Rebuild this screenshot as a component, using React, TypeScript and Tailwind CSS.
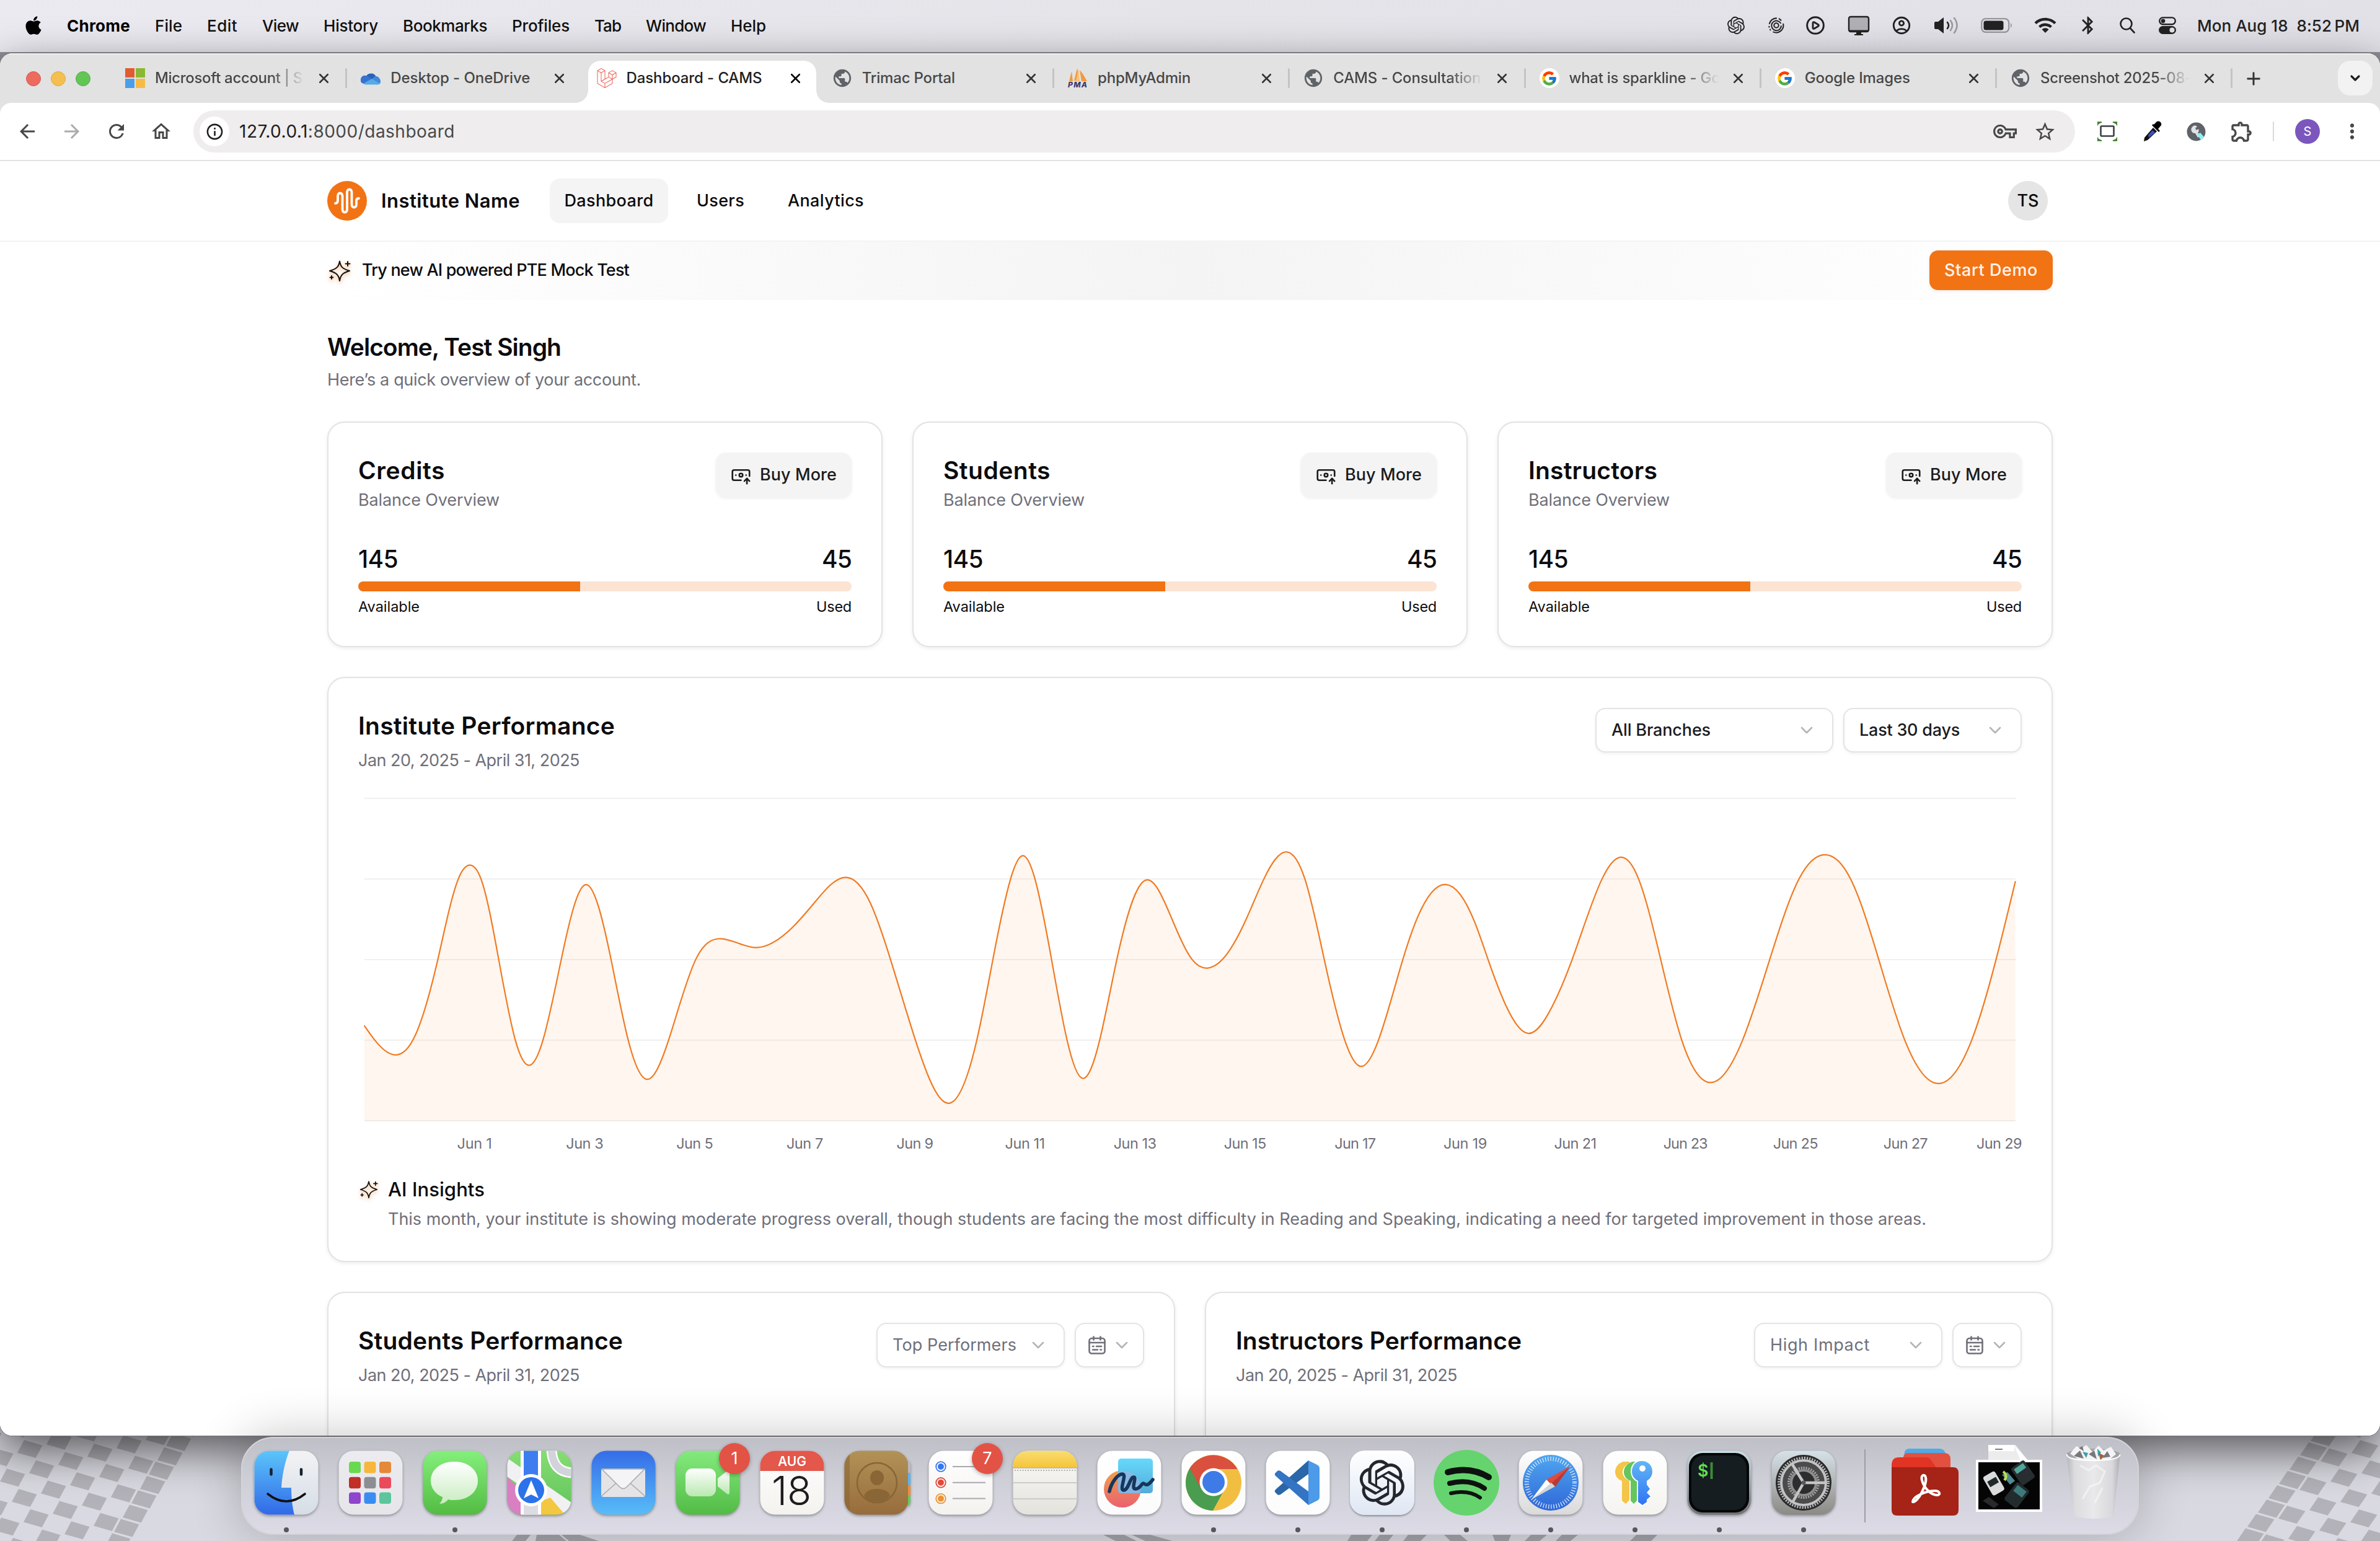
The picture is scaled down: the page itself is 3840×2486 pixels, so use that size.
import { useLayoutEffect, useRef, type ReactNode } from "react";
import { BanknoteArrowUp, ChevronDown, X, Plus, CirclePlay } from "lucide-react";
import { FaApple, FaLaravel } from "react-icons/fa";
import { FcGoogle } from "react-icons/fc";
import { RiOpenaiFill } from "react-icons/ri";
import {
  MdArrowBack,
  MdArrowForward,
  MdBluetooth,
  MdMoreVert,
  MdOutlineAccountCircle,
  MdOutlineExtension,
  MdOutlineHome,
  MdOutlineInfo,
  MdOutlineVpnKey,
  MdPublic,
  MdRefresh,
  MdStarBorder,
} from "react-icons/md";

/** Single line of text whose tracking is adjusted so that it occupies `w` pixels. */
function Fit({ w, className = "", children }: { w: number; className?: string; children: ReactNode }) {
  const ref = useRef<HTMLSpanElement>(null);
  useLayoutEffect(() => {
    const el = ref.current;
    if (!el) return;
    el.style.letterSpacing = "0px";
    const natural = el.getBoundingClientRect().width;
    const count = (el.textContent ?? "").length;
    el.style.letterSpacing = `${(w - natural) / count}px`;
  }, [w]);
  return (
    <span ref={ref} className={`inline-block shrink-0 whitespace-pre ${className}`}>
      {children}
    </span>
  );
}

/* ------------------------------------------------------------------ desktop */

function Wallpaper() {
  const cells: string[] = [];
  for (let i = -14; i <= 0; i++) {
    for (let m = -14; m <= 16; m++) {
      if (i !== 0 && (((i + m) % 2) + 2) % 2 !== 0) continue;
      const x = 265 + 33 * i - 14 * m;
      const y = 45 + 9.7 * i + 23.1 * m;
      cells.push(`M${x} ${y}l29.5 8.7l-10.8 20.4l-29.7 -8.4z`);
    }
  }
  const right: string[] = [];
  for (let i = 0; i <= 9; i++) {
    for (let m = -8; m <= 12; m++) {
      if (i !== 0 && (i + m + 20) % 2 !== 0) continue;
      const x = 3708 + 33 * i - 17 * m;
      const y = 60 + 9.7 * i + 23.1 * m;
      right.push(`M${x} ${y}l29.5 8.7l-13.8 20.4l-29.7 -8.4z`);
    }
  }
  return (
    <svg className="absolute bottom-0 left-0 h-[196px] w-[3840px]" viewBox="0 0 3840 196">
      <path d={cells.join("")} fill="#b2b2b8" />
      <path d={right.join("")} fill="#b2b2b8" />
      <g fill="#a3a3ab">
        <path d="M834 186l22 0l-8 10l-22 0zM866 186l36 0l12 10l-50 0zM906 186l30 0l30 10l-48 0z" />
        <path d="M1780 186l34 0l20 10l-34 0zM1826 186l30 0l36 10l-44 0z" />
        <path d="M2180 186l34 0l-8 10l-32 0zM2226 186l22 0l-8 10l-22 0zM2272 186l30 0l-10 10l-28 0zM2330 186l26 0l12 10l-28 0zM2408 186l30 0l-4 10l-22 0zM2470 186l26 0l-12 10l-24 0zM2520 186l26 0l-12 10l-24 0zM2640 186l34 0l-10 10l-34 0z" />
      </g>
    </svg>
  );
}

function MenuBar() {
  const items: [string, number][] = [
    ["File", 44],
    ["Edit", 49],
    ["View", 59],
    ["History", 88],
    ["Bookmarks", 136],
    ["Profiles", 93],
    ["Tab", 43],
    ["Window", 97],
    ["Help", 57],
  ];
  return (
    <div className="relative flex h-[84px] items-center bg-gradient-to-r from-[#ebeaf0] via-[#e5e4e9] to-[#e2e1e8] pb-[2px] text-[26px] font-medium text-[#111]">
      <FaApple className="ml-[37px] h-[34px] w-[34px] text-black" />
      <div className="ml-[37px] flex gap-10">
        <Fit w={102} className="font-bold text-black">Chrome</Fit>
        {items.map(([t, w]) => (
          <Fit key={t} w={w}>{t}</Fit>
        ))}
      </div>
      <div className="ml-auto flex items-center text-[#222]">
        <RiOpenaiFill className="h-[34px] w-[34px]" />
        <svg className="ml-[35px] h-[26px] w-[26px]" viewBox="0 0 28 28" fill="none" stroke="currentColor" strokeWidth="2.200" strokeLinecap="round">
          <circle cx="14" cy="14" r="4" />
          <path d="M14 1.500A12.500 12.500 0 0 0 2 11M1.500 16v1M3.500 21v1M9 25.500a12.500 12.500 0 0 0 17-14M19 2.500l3 2.500" />
          <path d="M21.500 10a8.500 8.500 0 1 0-2 11q3-3 3-6" />
        </svg>
        <CirclePlay className="ml-[34px] h-[32px] w-[32px]" strokeWidth={2.200} fill="none" />
        <svg className="ml-[36px] h-[32px] w-[36px]" viewBox="0 0 36 32">
          <rect x="2" y="2" width="32" height="24" rx="3" fill="#b1b0b6" stroke="#222" strokeWidth="2.400" />
          <path d="M2 23.500h32v0.500a3 3 0 0 1-3 3H5a3 3 0 0 1-3-3zM14 26h8v4h3v2H11v-2h3z" fill="#222" />
        </svg>
        <MdOutlineAccountCircle className="ml-[34px] h-[34px] w-[34px]" />
        <svg className="ml-[35px] h-[32px] w-[42px]" viewBox="0 0 42 32" fill="none" strokeLinecap="round" strokeWidth="2.600">
          <path d="M1 12v8a2 2 0 0 0 2 2h4l9 7V3L7 10H3a2 2 0 0 0-2 2z" fill="#222" />
          <path d="M22 11q4 5 0 10" stroke="#222" />
          <path d="M27 8q6 8 0 16M33 4q9 12 0 24" stroke="#9b9aa0" />
        </svg>
        <svg className="ml-[34px] h-[24px] w-[52px]" viewBox="0 0 52 24">
          <rect x="1.200" y="1.200" width="44" height="21.600" rx="6.500" fill="none" stroke="#98979d" strokeWidth="2.200" />
          <rect x="4.500" y="4.500" width="32" height="15" rx="3.500" fill="#222" />
          <path d="M48 8q4 4 0 8z" fill="#98979d" />
        </svg>
        <svg className="ml-[34px] h-[26px] w-[36px]" viewBox="0 0 36 26" fill="none" stroke="#222" strokeWidth="4.400">
          <path d="M2 9.500a23 23 0 0 1 32 0M8.500 15.500a14 14 0 0 1 19 0" />
          <path d="M18 25l-5.500-5.500a8 8 0 0 1 11 0z" fill="#222" stroke="none" />
        </svg>
        <MdBluetooth className="ml-[34px] h-[34px] w-[34px]" />
        <svg className="ml-[34px] h-[26px] w-[25px]" viewBox="0 0 25 26" fill="none" stroke="#222" strokeWidth="2.600" strokeLinecap="round">
          <circle cx="10.500" cy="10.500" r="9" />
          <path d="M17 17.500l6.500 7" />
        </svg>
        <svg className="ml-[38px] h-[28px] w-[28px]" viewBox="0 0 28 28">
          <rect x="1.200" y="1.400" width="25.600" height="10.800" rx="5.400" fill="none" stroke="#222" strokeWidth="2.400" />
          <circle cx="7" cy="6.800" r="3.400" fill="#222" />
          <rect x="0" y="15" width="28" height="13" rx="6.500" fill="#222" />
          <circle cx="21.500" cy="21.500" r="4" fill="#e3e2e8" />
        </svg>
        <Fit w={262} className="ml-[34px] mr-[33px]">{"Mon Aug 18  8:52\u2009PM"}</Fit>
      </div>
    </div>
  );
}

/* ------------------------------------------------------------------ browser */

const MsIcon = () => (
  <svg className="h-8 w-8" viewBox="0 0 32 32">
    <path d="M0 0h15v15H0z" fill="#e05b30" />
    <path d="M17 0h15v15H17z" fill="#8ab834" />
    <path d="M0 17h15v15H0z" fill="#4a9fe8" />
    <path d="M17 17h15v15H17z" fill="#f6bb42" />
  </svg>
);

const OneDriveIcon = () => (
  <svg className="h-8 w-8" viewBox="0 0 32 32">
    <path d="M8 15a9 9 0 0 1 17-1l-6 8z" fill="#2862b8" />
    <path d="M2 24a7 7 0 0 1 6-12c4 0 8 4 12 7l-12 7z" fill="#3573d1" />
    <path d="M18 18c3-5 8-6 10-4 4 3 5 8 3 11l-6 1z" fill="#4089dc" />
    <path d="M4 25l14-8 13 8a7 7 0 0 1-6 1.500H8A7 7 0 0 1 4 25z" fill="#55aae8" />
  </svg>
);

const PmaIcon = () => (
  <svg className="h-8 w-8 overflow-visible" viewBox="0 0 32 32">
    <path d="M6 5L2 21h6zM15 0L10 20l9 1zM19 3l3 18 9 0-7-12z" fill="#f29a3a" />
    <path d="M17 1l2 20-6-1z" fill="#f7c27c" />
    <text x="0" y="31" fontSize="12" fontWeight="800" fontStyle="italic" textLength="31" fill="#3a3a70">PMA</text>
  </svg>
);

const GoogleIcon = () => (
  <span className="flex h-8 w-8 items-center justify-center rounded-full bg-white">
    <FcGoogle className="h-[27px] w-[27px]" />
  </span>
);

const GlobeIcon = () => <MdPublic className="h-[34px] w-[34px] text-[#5f6368]" />;

type TabInfo = { title: string; w: number; icon: ReactNode; fade?: boolean; active?: boolean; sep?: boolean };

const tabs: TabInfo[] = [
  { title: "Microsoft account | S", w: 238, icon: <MsIcon />, fade: true, sep: true },
  { title: "Desktop - OneDrive", w: 225, icon: <OneDriveIcon /> },
  { title: "Dashboard - CAMS", w: 219, icon: <FaLaravel className="h-8 w-8 text-[#ec5f50]" />, active: true },
  { title: "Trimac Portal", w: 150, icon: <GlobeIcon />, sep: true },
  { title: "phpMyAdmin", w: 150, icon: <PmaIcon />, sep: true },
  { title: "CAMS - Consultation", w: 238, icon: <GlobeIcon />, fade: true, sep: true },
  { title: "what is sparkline - Go", w: 244, icon: <GoogleIcon />, fade: true, sep: true },
  { title: "Google Images", w: 170, icon: <GoogleIcon />, sep: true },
  { title: "Screenshot 2025-08-", w: 244, icon: <GlobeIcon />, fade: true, sep: true },
];

function TabStrip() {
  return (
    <div className="flex h-[80px] items-start border-t-2 border-[#f0f0f0] bg-[#e2e2e2]">
      <div className="flex h-[78px] w-[180px] shrink-0 items-center gap-4 pl-[42px]">
        <span className="h-6 w-6 rounded-full border border-[#d65a50] bg-[#ed6a5f]" />
        <span className="h-6 w-6 rounded-full border border-[#dfab45] bg-[#f5bf4f]" />
        <span className="h-6 w-6 rounded-full border border-[#55b048] bg-[#62c554]" />
      </div>
      {tabs.map((t) => (
        <div key={t.title} className="relative mt-[10px] flex h-[68px] w-[380.25px] shrink-0 items-center">
          {t.active && (
            <>
              <div className="absolute top-0 right-[4px] bottom-0 left-[8px] rounded-t-[20px] bg-white" />
              <div className="absolute bottom-0 left-[-12px] h-5 w-5 bg-[radial-gradient(circle_at_0_0,#e2e2e2_19.500px,#fff_20px)]" />
              <div className="absolute right-[-16px] bottom-0 h-5 w-5 bg-[radial-gradient(circle_at_100%_0,#e2e2e2_19.500px,#fff_20px)]" />
            </>
          )}
          <div className="relative mb-3 ml-[21px] flex w-[34px] justify-center">{t.icon}</div>
          <div
            className={`relative mb-3 ml-[15px] w-[246px] overflow-hidden text-[24px] leading-[36px] font-medium ${t.active ? "text-[#1f1f1f]" : "text-[#474747]"} ${t.fade ? "[mask-image:linear-gradient(90deg,#000_76%,transparent_98%)]" : ""}`}
          >
            <Fit w={t.w} className="align-top">{t.title}</Fit>
          </div>
          <X className={`relative mb-3 ml-[14px] h-[25px] w-[25px] ${t.active ? "text-black" : "text-[#333]"}`} strokeWidth={2.500} />
          {t.sep && <div className="absolute top-[12px] right-0 h-8 w-[3px] rounded bg-[#c4c4c4]" />}
        </div>
      ))}
      <Plus className="mt-[23px] ml-[18px] h-[32px] w-[32px] text-[#333]" strokeWidth={2.200} />
      <div className="mt-[10px] mr-3 ml-auto flex h-[56px] w-[56px] items-center justify-center rounded-[20px] bg-[#f2f2f2]">
        <ChevronDown className="h-[24px] w-[24px] text-[#1c1c1c]" strokeWidth={3.200} />
      </div>
    </div>
  );
}

function Toolbar() {
  return (
    <div className="bg-[#e2e2e2]">
      <div className="flex h-[94px] items-center rounded-t-[18px] border-b-2 border-[#e2e2e2] bg-white text-[#474747]">
        <MdArrowBack className="ml-[26px] h-9 w-9" />
        <MdArrowForward className="ml-9 h-9 w-9 text-[#ababab]" />
        <MdRefresh className="ml-9 h-9 w-9" />
        <MdOutlineHome className="ml-9 h-9 w-9" />
        <div className="ml-[34px] flex h-[68px] w-[3036px] items-center rounded-full bg-[#efeded] pl-[10px]">
          <span className="flex h-12 w-12 items-center justify-center rounded-full bg-white">
            <MdOutlineInfo className="h-[31px] w-[31px] text-[#1f1f1f]" />
          </span>
          <Fit w={348} className="ml-4 text-[28px] text-[#47484a]">
            <span className="text-[#1c1c1c]">127.0.0.1</span>:8000/dashboard
          </Fit>
          <MdOutlineVpnKey className="mr-[27px] ml-auto h-[38px] w-[38px]" />
          <MdStarBorder className="mr-[30px] h-[37px] w-[37px]" />
        </div>
        <svg className="ml-9 h-8 w-8" viewBox="0 0 32 32" fill="none">
          <rect x="5.500" y="7.500" width="21" height="16" rx="1.500" stroke="#3c4043" strokeWidth="2.600" />
          <path d="M0 6V1h7L2 3zM32 6V1h-7l5 2zM0 26v5h7l-5-2zM32 26v5h-7l5-2z" fill="#3f7d2c" stroke="#3f7d2c" strokeWidth="1.500" />
        </svg>
        <svg className="ml-[41px] h-[34px] w-[32px]" viewBox="0 0 32 34">
          <path d="M3 27L17 11l6 6L8 31l-6 2z" fill="#111" />
          <path d="M9 23l7-8 4 4-10 8z" fill="#3d50c4" />
          <path d="M15 7l11 11 2-2-3-3 5-6a5 5 0 0 0-7-6l-5 5-1-1z" fill="#000" />
        </svg>
        <svg className="ml-[39px] h-[31px] w-[31px]" viewBox="0 0 31 31">
          <circle cx="15.500" cy="15.500" r="15" fill="#5f6368" />
          <path d="M9 8a5 5 0 0 1 8-1l-3 3 2 3 3-2a5 5 0 0 1-1 6l4 5-4 3-4-7a6 6 0 0 1-5-10z" fill="#dfe3e6" />
          <path d="M17 20l5-3 6 7-5 5z" fill="#8ef0f3" />
        </svg>
        <MdOutlineExtension className="ml-[38px] h-[40px] w-[40px]" />
        <div className="ml-[30px] h-8 w-[2px] rounded bg-[#dadada]" />
        <span className="ml-[34px] flex h-10 w-10 items-center justify-center rounded-full bg-[#7b57bd] text-[20px] text-white">S</span>
        <MdMoreVert className="ml-[33px] h-[38px] w-[38px]" />
      </div>
    </div>
  );
}

/* ---------------------------------------------------------------- dashboard */

function Sparkle({ className }: { className: string }) {
  return (
    <svg
      className={`${className} overflow-visible [filter:drop-shadow(0_3px_3px_rgba(242,115,20,0.600))]`}
      viewBox="0 0 36 36"
      fill="none"
      stroke="#16120f"
      strokeWidth="2"
      strokeLinecap="round"
      strokeLinejoin="round"
    >
      <path d="M18 2.500C19.500 11 22 14.500 34 18C22 21.500 19.500 25 18 34C16.500 25 14 21.500 2 18C14 14.500 16.500 11 18 2.500Z" />
      <path d="M31 3v7M27.500 6.500h7M5 26v5M2.500 28.500h5" />
    </svg>
  );
}

function Chevron() {
  return (
    <svg className="h-[12px] w-[20px] shrink-0" viewBox="0 0 20 12" fill="none" stroke="#b4b4b8" strokeWidth="2.600" strokeLinecap="round" strokeLinejoin="round">
      <path d="M2 2l8 8 8-8" />
    </svg>
  );
}

function Calendar() {
  return (
    <svg className="h-[30px] w-[28px] shrink-0" viewBox="0 0 28 30" fill="none" stroke="#6f6f79" strokeWidth="2.600" strokeLinecap="round">
      <rect x="1.500" y="4" width="25" height="24.500" rx="4" />
      <path d="M8.500 1.500v5M19.500 1.500v5M1.500 11h25M7 17h1.500M13 17h8M7 22.500h8M19.500 22.500h1.500" />
    </svg>
  );
}

function SiteHeader() {
  return (
    <div className="flex h-[130px] items-center border-b-2 border-[#f3f3f3] bg-white px-[528px] text-[27px] font-[450] text-[#0c0c0e]">
      <span className="flex h-16 w-16 items-center justify-center rounded-full bg-[#f27314]">
        <svg className="h-11 w-11" viewBox="0 0 44 44" fill="none" stroke="#fff" strokeWidth="3.800" strokeLinecap="round" strokeLinejoin="round">
          <path d="M1.500 24c3 0 4-2 4-5v-7c0-6 7.500-6 7.500 0v22c0 6 7.500 6 7.500 0V6c0-6 7.500-6 7.500 0v20c0 6 7.500 6 7.500 0v-6c0-3 2-4 4-4" transform="translate(1.500 2)" />
        </svg>
      </span>
      <Fit w={224} className="ml-[23px] text-[31px] font-semibold">Institute Name</Fit>
      <div className="ml-[48px] flex h-[72px] w-[191px] items-center justify-center rounded-[16px] bg-[#f4f4f4]">
        <Fit w={144}>Dashboard</Fit>
      </div>
      <Fit w={77} className="ml-[46px]">Users</Fit>
      <Fit w={123} className="ml-[70px]">Analytics</Fit>
      <span className="mr-2 ml-auto flex h-16 w-16 items-center justify-center rounded-full bg-[#e5e5e5]">TS</span>
    </div>
  );
}

function Banner() {
  return (
    <div className="flex h-[94px] items-start bg-[linear-gradient(90deg,#fff_14%,#f4f4f4_50%,#fff_86%)] px-[528px] pt-[14px]">
      <div className="flex h-16 items-center pt-px">
        <Sparkle className="ml-[2px] h-9 w-9" />
        <Fit w={431} className="ml-[18px] text-[27px] font-[450] text-[#0c0c0e]">Try new AI powered PTE Mock Test</Fit>
      </div>
      <div className="ml-auto flex h-16 w-[199px] items-center justify-center rounded-[14px] bg-[#f27314] pt-px text-[27px] font-[450] text-[#fff4ec] shadow-[0_2px_5px_rgba(0,0,0,0.080)]">
        <Fit w={151}>Start Demo</Fit>
      </div>
    </div>
  );
}

const cardClass = "rounded-[28px] border-2 border-[#e3e3e5] bg-white p-12 shadow-[0_2px_6px_rgba(0,0,0,0.080)]";
const titleClass = "block h-[56px] text-[39px] leading-[58px] font-semibold text-[#0c0c0e]";
const subClass = "block h-[40px] text-[27px] leading-[42px] text-[#6f6f79]";

function BalanceCard({ title, w }: { title: string; w: number }) {
  return (
    <div className={`${cardClass} h-[364px] flex-1`}>
      <div className="flex h-[96px] items-start justify-between">
        <div>
          <div className={titleClass}><Fit w={w}>{title}</Fit></div>
          <div className={subClass}><Fit w={228}>Balance Overview</Fit></div>
        </div>
        <div className="flex h-[72px] w-[219px] items-center rounded-[16px] bg-[#f4f4f4] shadow-[0_2px_5px_rgba(0,0,0,0.070)]">
          <BanknoteArrowUp className="ml-[24px] h-[33px] w-[33px] text-[#1b1b1e]" strokeWidth={1.900} />
          <Fit w={124} className="ml-[14px] pt-px text-[27px] font-[450] text-[#1b1b1e]">Buy More</Fit>
        </div>
      </div>
      <div className="mt-12 flex h-[56px] items-center justify-between pt-px text-[39px] font-[450] text-[#0c0c0e]">
        <Fit w={64}>145</Fit>
        <Fit w={48}>45</Fit>
      </div>
      <div className="mt-2 h-4 overflow-hidden rounded-[8px] bg-[#fce3d2]">
        <div className="h-full w-[45%] bg-[#f27314]" />
      </div>
      <div className="mt-[7px] flex h-9 items-center justify-between text-[23.500px] text-[#0c0c0e]">
        <Fit w={99}>Available</Fit>
        <Fit w={57}>Used</Fit>
      </div>
    </div>
  );
}

/* Curve samples for both halves of the plot, in sampling units. */
const leftHalf: [number, number][] = [
  [31, 1076], [50, 1142], [89, 1209], [119, 1142], [164, 778], [201, 414], [222, 352], [242, 414], [274, 778],
  [304, 1142], [329, 1256], [354, 1142], [387, 778], [431, 440], [477, 778], [508, 1142], [541, 1319], [581, 1142],
  [630, 778], [675, 684], [737, 724], [806, 630], [845, 520], [901, 407], [945, 520], [982, 778], [1027, 1142],
  [1089, 1427], [1138, 1142], [1167, 778], [1199, 414], [1221, 309], [1243, 414], [1273, 778], [1301, 1142],
  [1329, 1315], [1360, 1142], [1391, 778], [1444, 419], [1488, 580], [1527, 778],
];
const rightHalf: [number, number][] = [
  [53, 817], [81, 778], [125, 590], [156, 414], [197, 292], [230, 414], [265, 778], [302, 1142], [331, 1261],
  [363, 1142], [407, 778], [434, 585], [484, 439], [537, 610], [561, 778], [594, 990], [634, 1112], [677, 990],
  [713, 778], [767, 414], [802, 316], [833, 414], [873, 778], [911, 1142], [963, 1334], [1021, 1142], [1070, 778],
  [1123, 414], [1170, 305], [1216, 414], [1267, 778], [1314, 1142], [1377, 1338], [1435, 1142], [1479, 778],
  [1514, 424],
];
const samples = [
  ...leftHalf.map(([x, y]) => [x * 0.89286 - 18, y * 0.35714 - 16]),
  ...rightHalf.map(([x, y]) => [x * 0.89286 + 1322, y * 0.35714 - 16]),
];

/** Natural cubic spline through the points, written as bezier segments. */
function splinePath(p: number[][]) {
  const n = p.length;
  const h = p.slice(1).map((q, i) => q[0] - p[i][0]);
  const d = p.slice(1).map((q, i) => (q[1] - p[i][1]) / h[i]);
  // Tridiagonal system for the slopes, zero curvature at both ends.
  const a: number[] = [];
  const b: number[] = [];
  const c: number[] = [];
  const r: number[] = [];
  for (let i = 0; i < n; i++) {
    if (i === 0) {
      a.push(0);
      b.push(2);
      c.push(1);
      r.push(3 * d[0]);
    } else if (i === n - 1) {
      a.push(1);
      b.push(2);
      c.push(0);
      r.push(3 * d[n - 2]);
    } else {
      a.push(h[i]);
      b.push(2 * (h[i - 1] + h[i]));
      c.push(h[i - 1]);
      r.push(3 * (h[i] * d[i - 1] + h[i - 1] * d[i]));
    }
  }
  for (let i = 1; i < n; i++) {
    const k = a[i] / b[i - 1];
    b[i] -= k * c[i - 1];
    r[i] -= k * r[i - 1];
  }
  const s = new Array<number>(n);
  s[n - 1] = r[n - 1] / b[n - 1];
  for (let i = n - 2; i >= 0; i--) s[i] = (r[i] - c[i] * s[i + 1]) / b[i];
  let path = `M${p[0][0]} ${p[0][1]}`;
  for (let i = 0; i < n - 1; i++) {
    const t = h[i] / 3;
    path += `C${p[i][0] + t} ${p[i][1] + t * s[i]} ${p[i + 1][0] - t} ${p[i + 1][1] - t * s[i + 1]} ${p[i + 1][0]} ${p[i + 1][1]}`;
  }
  return path;
}

function PerformanceChart() {
  const line = splinePath(samples);
  return (
    <svg className="mt-10 block h-[524px] w-[2684px]" viewBox="0 0 2684 524" fill="none">
      {[2, 132, 262, 392, 522].map((y) => (
        <path key={y} d={`M10 ${y}H2674`} stroke="#f0f0f1" strokeWidth="2" />
      ))}
      <path d={`${line}V522H10Z`} fill="#f27314" fillOpacity="0.065" />
      <path d={line} stroke="#f07a22" strokeWidth="2.200" />
    </svg>
  );
}

function Select({ label, w, className, muted }: { label: string; w: number; className: string; muted?: boolean }) {
  return (
    <div
      className={`flex h-[72px] items-center justify-between rounded-[16px] border-2 border-[#e4e4e6] bg-white pr-[31px] pl-[24px] text-[27px] shadow-[0_2px_5px_rgba(0,0,0,0.060)] ${muted ? "text-[#6f6f79]" : "font-[450] text-[#1b1b1e]"} ${className}`}
    >
      <Fit w={w} className="pt-px">{label}</Fit>
      <Chevron />
    </div>
  );
}

function PerformanceCard() {
  const days = ["1", "3", "5", "7", "9", "11", "13", "15", "17", "19", "21", "23", "25", "27", "29"];
  const widths = [56, 60, 59, 59, 59, 64, 69, 68, 66, 70, 68, 71, 72, 71, 73];
  return (
    <div className={`${cardClass} h-[944px]`}>
      <div className="flex h-[104px] justify-between">
        <div className="flex flex-col gap-2">
          <div className={titleClass}><Fit w={414}>Institute Performance</Fit></div>
          <div className={subClass}><Fit w={357}>Jan 20, 2025 - April 31, 2025</Fit></div>
        </div>
        <div className="flex gap-4">
          <Select label="All Branches" w={160} className="w-[384px]" />
          <Select label="Last 30 days" w={162} className="w-[288px]" />
        </div>
      </div>
      <PerformanceChart />
      <div className="mt-[19px] flex h-8 items-center pl-[98.8px] text-[23.500px] text-[#6f6f79]">
        {days.map((d, i) => (
          <div key={d} className="flex w-[177.6px] justify-center last:w-[98.8px] last:justify-end">
            <Fit w={widths[i]}>{`Jun ${d}`}</Fit>
          </div>
        ))}
      </div>
      <div className="mt-9 flex h-11 items-center">
        <Sparkle className="ml-[2px] h-[30px] w-[30px]" />
        <Fit w={156} className="ml-[16px] text-[31px] font-[450] text-[#0c0c0e]">AI Insights</Fit>
      </div>
      <div className="mt-[6px] h-10 pl-[48px] text-[27px] leading-[40px] text-[#6f6f79]">
        <Fit w={2482}>
          This month, your institute is showing moderate progress overall, though students are facing the most difficulty in Reading and Speaking, indicating a need for targeted improvement in those areas.
        </Fit>
      </div>
    </div>
  );
}

function RankingCard({ title, w, option, ow }: { title: string; w: number; option: string; ow: number }) {
  return (
    <div className={`${cardClass} flex h-[420px] flex-1 justify-between`}>
      <div className="flex flex-col gap-2">
        <div className={titleClass}><Fit w={w}>{title}</Fit></div>
        <div className={subClass}><Fit w={357}>Jan 20, 2025 - April 31, 2025</Fit></div>
      </div>
      <div className="flex gap-4">
        <Select label={option} w={ow} className="w-[304px]" muted />
        <div className="flex h-[72px] w-[112px] items-center justify-between rounded-[16px] border-2 border-[#e4e4e6] bg-white pr-[24px] pl-[20px] shadow-[0_2px_5px_rgba(0,0,0,0.060)]">
          <Calendar />
          <Chevron />
        </div>
      </div>
    </div>
  );
}

function Dashboard() {
  return (
    <div className="bg-white">
      <SiteHeader />
      <Banner />
      <div className="mx-[528px] pt-[48px]">
        <div className="h-[56px] text-[39px] leading-[56px] font-semibold text-[#0c0c0e]">
          <Fit w={377}>Welcome, Test Singh</Fit>
        </div>
        <div className="mt-1 h-[40px] text-[27px] leading-[42px] text-[#6f6f79]">
          <Fit w={506}>Here’s a quick overview of your account.</Fit>
        </div>
        <div className="mt-12 flex gap-12">
          <BalanceCard title="Credits" w={140} />
          <BalanceCard title="Students" w={173} />
          <BalanceCard title="Instructors" w={208} />
        </div>
        <div className="mt-12">
          <PerformanceCard />
        </div>
        <div className="mt-12 flex gap-12">
          <RankingCard title="Students Performance" w={427} option="Top Performers" ow={200} />
          <RankingCard title="Instructors Performance" w={461} option="High Impact" ow={161} />
        </div>
      </div>
    </div>
  );
}

/* --------------------------------------------------------------------- dock */

function Grad({ id, a, b }: { id: string; a: string; b: string }) {
  return (
    <linearGradient id={id} x1="0" y1="0" x2="0" y2="1">
      <stop offset="0" stopColor={a} />
      <stop offset="1" stopColor={b} />
    </linearGradient>
  );
}

function Tile({ id, a, b, children, over }: { id: string; a: string; b: string; children?: ReactNode; over?: ReactNode }) {
  return (
    <svg className="h-[104px] w-[104px] overflow-visible drop-shadow-[0_2px_2px_rgba(0,0,0,0.350)]" viewBox="0 0 104 104">
      <defs>
        <Grad id={id} a={a} b={b} />
        <clipPath id={`${id}-clip`}>
          <rect x="0.500" y="0.500" width="103" height="103" rx="24" />
        </clipPath>
      </defs>
      <g clipPath={`url(#${id}-clip)`}>
        <rect width="104" height="104" fill={`url(#${id})`} />
        {children}
      </g>
      {over}
    </svg>
  );
}

const Finder = () => (
  <Tile id="finder" a="#f3f3f5" b="#d5dde6">
    <defs><Grad id="finder-blue" a="#5cc5fa" b="#3169e8" /></defs>
    <path d="M0 0H57C49 20 45 42 44 60H60C60 78 62 92 65 104H0Z" fill="url(#finder-blue)" />
    <path d="M27.500 30.500v8M76 30.500v8" stroke="#14222f" strokeWidth="4.500" strokeLinecap="round" />
    <path d="M22 70q30 24 60 0" stroke="#111" strokeWidth="3.600" fill="none" strokeLinecap="round" />
  </Tile>
);

const Launchpad = () => {
  const colors = ["#6ad94f", "#f6b73c", "#e5883a", "#c22f26", "#8b8e92", "#ea4a5c", "#8f45cc", "#3a8df0", "#5cc59c"];
  return (
    <Tile id="launchpad" a="#ececf0" b="#e6e6ea">
      {colors.map((c, i) => (
        <rect key={c} x={17 + (i % 3) * 24.500} y={18 + Math.floor(i / 3) * 24.700} width="19" height="18.500" rx="4" fill={c} />
      ))}
    </Tile>
  );
};

const Messages = () => (
  <Tile id="messages" a="#84ef7c" b="#53bb42">
    <defs><Grad id="bubble" a="#ffffff" b="#c9ecc0" /></defs>
    <path d="M51 18c22 0 38 13 38 31S73 80 51 80c-4 0-7 0-10-1-3 4-8 7-14 7 3-3 5-7 5-11C20 70 13 60 13 49c0-18 16-31 38-31z" fill="url(#bubble)" />
  </Tile>
);

const Maps = () => (
  <Tile id="maps" a="#86dd73" b="#5fc35a">
    <path d="M0 42L60 104H0z" fill="#d97fc2" />
    <path d="M0 12L104 84v20H90L0 42z" fill="#f1f1f4" />
    <path d="M54 82l16-6 24 28H54z" fill="#f3c73f" />
    <path d="M72 0q2 34 32 36" stroke="#fff" strokeWidth="17" fill="none" />
    <path d="M72 0q2 34 32 36" stroke="#d2d3db" strokeWidth="12" fill="none" />
    <path d="M22 0h33v104H22z" fill="#fff" />
    <path d="M27 0h23v50H27z" fill="#3d7df0" />
    <path d="M27 50h23v54H27z" fill="#dcdce2" />
    <circle cx="39" cy="64" r="26" fill="#fff" />
    <circle cx="39" cy="64" r="21" fill="#2c72ea" />
    <path d="M39 48l12 29-12-6-12 6z" fill="#fff" />
  </Tile>
);

const Mail = () => (
  <Tile id="mail" a="#356ce8" b="#58bdf8">
    <rect x="16" y="29" width="71" height="46" rx="4" fill="#e4e4e6" />
    <path d="M17 73l25-22M86 73L61 51" stroke="#a8a8ac" strokeWidth="1.500" />
    <path d="M17 30h69L57 59q-5.500 5-11 0z" fill="#f4f4f5" stroke="#a8a8ac" strokeWidth="1.500" />
  </Tile>
);

const FaceTime = () => (
  <Tile id="facetime" a="#84ea7e" b="#52bb45">
    <defs><Grad id="cam" a="#ffffff" b="#b9e8b0" /></defs>
    <rect x="16" y="29" width="49" height="45" rx="11" fill="url(#cam)" />
    <path d="M68 45L83 33q4-2 4 2v33q0 4-4 2L68 58z" fill="url(#cam)" />
  </Tile>
);

const CalendarApp = () => (
  <Tile id="cal" a="#ffffff" b="#f3f2ee">
    <rect width="104" height="33" fill="#e4574b" />
    <text x="52" y="25" fontSize="21" fontWeight="600" textAnchor="middle" fill="#fff">AUG</text>
    <text x="51" y="88" fontSize="64" fontWeight="300" textAnchor="middle" textLength="64" fill="#1d1d1f">18</text>
  </Tile>
);

const Contacts = () => (
  <Tile
    id="contacts"
    a="#b29257"
    b="#976c3c"
    over={
      <g>
        <path d="M103 16q4 2 4 8v12h-4z" fill="#b8b8bc" />
        <path d="M103 37h4v18h-4z" fill="#5bb4ee" />
        <path d="M103 56h4v17h-4z" fill="#ec8f3a" />
        <path d="M103 74h4v6q0 7-4 10z" fill="#65cc5a" />
      </g>
    }
  >
    <path d="M0 0h9v104H0z" fill="#86612f" opacity="0.500" />
    <circle cx="53" cy="52" r="32" fill="none" stroke="#876536" strokeWidth="2.500" />
    <ellipse cx="53" cy="44" rx="11" ry="12" fill="#8a6535" />
    <path d="M32 73q4-11 21-11t21 11q-8 11-21 11T32 73z" fill="#8a6535" />
  </Tile>
);

const Reminders = () => (
  <Tile id="reminders" a="#ffffff" b="#f3f2ef">
    {["#3577f0", "#e2493c", "#ea9436"].map((c, i) => (
      <g key={c}>
        <circle cx="20" cy={26 + i * 25.800} r="7.800" fill="none" stroke={c} strokeWidth="1.800" />
        <circle cx="20" cy={26 + i * 25.800} r="5" fill={c} />
        <path d={`M39 ${26 + i * 25.800}H92`} stroke="#a9a9af" strokeWidth="2" />
      </g>
    ))}
  </Tile>
);

const Notes = () => (
  <Tile id="notes" a="#fbfbf9" b="#e3e2dc">
    <defs><Grad id="notes-top" a="#f9de70" b="#f5c53c" /></defs>
    <rect width="104" height="27" fill="url(#notes-top)" />
    <path d="M0 28H104" stroke="#b1a98b" strokeWidth="1.500" />
    <path d="M3 32H104" stroke="#a8a8a8" strokeWidth="1.800" strokeDasharray="1.800 2.400" />
    <path d="M0 52H104M0 78H104" stroke="#cbcbc8" strokeWidth="2" />
  </Tile>
);

const Freeform = () => (
  <Tile id="freeform" a="#ffffff" b="#fbfbfb">
    <defs>
      <Grad id="ff-blue" a="#65d9fb" b="#56abd8" />
      <Grad id="ff-red" a="#f0a049" b="#ea6070" />
    </defs>
    <circle cx="41" cy="62" r="30" fill="url(#ff-red)" />
    <rect x="34" y="13" width="56" height="56" rx="5" fill="url(#ff-blue)" />
    <path d="M34 35q18-8 31 9 8 12 4 25H39q-5 0-5-5z" fill="#8fb6e4" opacity="0.850" />
    <path d="M20 66C23 52 33 38 41 38S35 64 43 64 53 43 59 43 54 62 62 62 72 52 75 53 80 60 90 47" fill="none" stroke="#16375a" strokeWidth="5.500" strokeLinecap="round" strokeLinejoin="round" />
  </Tile>
);

const ChromeApp = () => (
  <Tile id="chrome" a="#ffffff" b="#fbfbfb">
    <circle cx="52" cy="52" r="45" fill="#f2be42" />
    <path d="M52 52L13.700 28.400A45 45 0 0 0 51 97L70 62z" fill="#4a9c50" />
    <path d="M52 30H90.500A45 45 0 0 1 51 97L71 63z" fill="#f2be42" />
    <path d="M13.500 28.500A45 45 0 0 1 90.500 30H52A22 22 0 0 0 32 62z" fill="#d9503f" />
    <circle cx="52" cy="51" r="22.500" fill="#fff" />
    <circle cx="52" cy="51" r="18" fill="#3f7be6" />
  </Tile>
);

const VsCode = () => (
  <Tile id="vscode" a="#ffffff" b="#fcfcfc">
    <path d="M69 16v22L24 71q-4 2-6-1l-3-3q-1-2 1-4z" fill="#2a66a8" />
    <path d="M69 88v-22L24 33q-4-2-6 1l-3 3q-1 2 1 4z" fill="#3474c4" />
    <path d="M69 16l14 7q4 2 4 6v46q0 4-4 6l-14 7z" fill="#4c9ae8" />
  </Tile>
);

const ChatGpt = () => (
  <div className="flex h-[104px] w-[104px] items-center justify-center rounded-[24px] bg-gradient-to-b from-white to-[#dfe7f4] shadow-[0_2px_3px_rgba(0,0,0,0.350)]">
    <RiOpenaiFill className="h-[88px] w-[88px] text-[#23262c]" />
  </div>
);

const Spotify = () => (
  <svg className="h-[104px] w-[104px] overflow-visible" viewBox="0 0 104 104">
    <circle cx="52" cy="52" r="53" fill="#65d46e" />
    <g fill="none" stroke="#0e120f" strokeLinecap="round">
      <path d="M22 35q36-10 66 8" strokeWidth="10" />
      <path d="M25 53q32-8 56 8" strokeWidth="8" />
      <path d="M27 69q28-6 47 7" strokeWidth="6" />
    </g>
  </svg>
);

const Safari = () => (
  <Tile id="safari" a="#ffffff" b="#dadada">
    <defs><Grad id="safari-dial" a="#4fa6ef" b="#2f67d8" /></defs>
    <circle cx="52" cy="52" r="45" fill="url(#safari-dial)" />
    <circle cx="52" cy="52" r="38.500" fill="none" stroke="#e4efff" strokeWidth="7" strokeDasharray="1.200 3.000" />
    <path d="M84 25L45 47l7 9z" fill="#dd4a3f" />
    <path d="M84 25L59 59l-7-5z" fill="#b93a34" />
    <path d="M21 79l24-32 8 8z" fill="#fff" />
    <path d="M21 79l38-21-6-6z" fill="#d2d5da" />
  </Tile>
);

const Passwords = () => {
  const key = "M0 0c10 0 17 7 17 17 0 7-4 12-9 15v6l5 7-5 6 6 6-6 5v4l-7 5-7-5V32c-6-3-10-8-10-15C-16 7-10 0 0 0z";
  return (
    <Tile id="passwords" a="#ffffff" b="#f4f3f0">
      <path d="M33 18c-9 3-13 9-13 17 0 7 5 12 11 14v32l6 5 6-6V18z" fill="#f3c548" />
      <path d="M48 18c-9 3-16 9-16 17 0 7 6 12 12 14v32l5 5 6-6V18z" fill="#fff" />
      <path d="M48 18c-9 3-14 9-14 17 0 7 5 12 11 14v32l5 5 6-6V18z" fill="#64c65c" />
      <g transform="translate(63 17)">
        <path d={key} fill="#fff" stroke="#fff" strokeWidth="4" />
        <defs><Grad id="key-blue" a="#62b6f4" b="#2f74f6" /></defs>
        <path d={key} fill="url(#key-blue)" />
        <circle cx="1" cy="12" r="5" fill="#fff" />
      </g>
    </Tile>
  );
};

const Terminal = () => (
  <Tile id="terminal" a="#c9dfe8" b="#6f7072">
    <rect x="3" y="4" width="97" height="96" rx="22" fill="#050606" />
    <rect x="7" y="8" width="89" height="88" rx="19" fill="#151d21" />
    <text x="17" y="42" fontSize="27" fontWeight="600" fill="#62e04e">$</text>
    <path d="M39.500 19v27" stroke="#3f8a35" strokeWidth="4" />
  </Tile>
);

const Settings = () => (
  <Tile id="settings" a="#d6e2e8" b="#8b8984">
    <circle cx="52" cy="52" r="45" fill="#2b2b2c" />
    <circle cx="52" cy="52" r="40" fill="none" stroke="#b9babb" strokeWidth="4" strokeDasharray="2.200 2" />
    <circle cx="52" cy="52" r="36" fill="#4b4b4b" stroke="#c2c3c4" strokeWidth="4" />
    <circle cx="52" cy="52" r="24" fill="none" stroke="#a3a3a3" strokeWidth="4" strokeDasharray="2.200 1.800" />
    <circle cx="52" cy="52" r="20" fill="#2d2d2e" stroke="#8c8c8c" strokeWidth="4" />
    <path d="M52 52H88M52 52L33 21M52 52L34 84" stroke="#c4c5c6" strokeWidth="4.500" />
    <circle cx="52" cy="52" r="3.500" fill="#55585a" />
  </Tile>
);

const AdobeFolder = () => (
  <svg className="h-[110px] w-[110px] overflow-visible" viewBox="0 0 110 110">
    <path d="M22 2q2-5 8-5h48q8 0 10 8l2 12H20z" fill="#4fabe6" />
    <path d="M20 12q0-8 8-8h58q10 0 10 10v20H20z" fill="#e4503f" />
    <path d="M1 24q0-13 12-13h44q5 0 8 5l7 10v10H1z" fill="#e23424" />
    <path d="M1 27h99q9 0 9 9v60q0 9-9 9H10q-9 0-9-9z" fill="#a52317" />
    <path d="M35 83c8 2 26-32 20-42-3-3-7 0-5 7 3 12 14 24 25 24 6-1 3-7-4-7-12 0-36 8-36 18z" fill="none" stroke="#fff" strokeWidth="4" strokeLinejoin="round" />
  </svg>
);

const Pictures = () => (
  <svg className="h-[110px] w-[108px] overflow-visible" viewBox="0 0 108 110">
    <path d="M20-9h44l20 25H20z" fill="#ececec" />
    <path d="M20-9h42v10H20zM62-8l22 24H72z" fill="#fff" />
    <path d="M31-2h12" stroke="#555" strokeWidth="1.500" />
    <rect x="0" y="15" width="107" height="84" fill="#fff" />
    <rect x="4" y="19" width="99" height="76" fill="#050505" />
    <g transform="translate(30 53) rotate(-30)">
      <rect x="-12" y="-18" width="22" height="35" rx="4" fill="#d9dcda" />
      <rect x="-9" y="-8" width="16" height="10" fill="#22282a" />
    </g>
    <g transform="translate(76 36) rotate(-35)">
      <rect x="-13" y="-17" width="26" height="34" rx="4" fill="#272d31" />
      <rect x="-9" y="-13" width="18" height="9" fill="#4fa79a" />
    </g>
    <g transform="translate(66 72) rotate(38)">
      <rect x="-13" y="-18" width="26" height="36" rx="4" fill="#222b2e" />
      <rect x="-9" y="-14" width="18" height="12" fill="#3b7b7c" />
    </g>
    <path d="M42 39l9-4 12 14-8 6z" fill="#4e8c8f" />
    <path d="M44 34q8 6 2 14" stroke="#c3da53" strokeWidth="4" fill="none" />
    <path d="M11 81l10-6 16 12-8 6z" fill="#27292a" />
  </svg>
);

const Trash = () => (
  <svg className="h-[112px] w-[92px] overflow-visible" viewBox="0 0 92 112">
    <defs>
      <linearGradient id="bin" x1="0" y1="0" x2="1" y2="0">
        <stop offset="0" stopColor="#b5b5ba" />
        <stop offset="0.150" stopColor="#dcdcdf" />
        <stop offset="0.500" stopColor="#e9e9eb" />
        <stop offset="0.850" stopColor="#d9d9dd" />
        <stop offset="1" stopColor="#acacb2" />
      </linearGradient>
    </defs>
    <path d="M2 4h87L79 99q-1 8-9 9-24 4-48 0-8-1-9-9z" fill="url(#bin)" />
    <ellipse cx="45.500" cy="6" rx="43" ry="9" fill="#a3a3a8" />
    <path d="M8 5l10-12 8 4 8-6 10 11 10-10 8 8 12-6 8 12-10 8-22 3-26-1z" fill="#f4f4f4" />
    <path d="M14 9l10-9 6 13zM38 6l9-6 4 14zM60 12l8-11 5 9zM22-4l6-3 2 8z" fill="#77777c" />
    <path d="M28 2l9 2-3 8zM52-3l6 6-5 7z" fill="#3c9fae" />
    <path d="M54 4l9 4-6 8z" fill="#a2603c" />
    <path d="M2.500 6q0 10 43 10t43-10" fill="none" stroke="#fff" strokeWidth="2" />
    <path d="M24 24l14 8 12-8 14 10-8 18-16 6-12 20M60 60l-12 24" stroke="#f6f6f6" strokeWidth="3" fill="none" opacity="0.700" />
  </svg>
);

type DockApp = { name: string; icon: ReactNode; running?: boolean; badge?: string };

const apps: DockApp[] = [
  { name: "finder", icon: <Finder />, running: true },
  { name: "launchpad", icon: <Launchpad /> },
  { name: "messages", icon: <Messages />, running: true },
  { name: "maps", icon: <Maps /> },
  { name: "mail", icon: <Mail /> },
  { name: "facetime", icon: <FaceTime />, badge: "1" },
  { name: "calendar", icon: <CalendarApp /> },
  { name: "contacts", icon: <Contacts /> },
  { name: "reminders", icon: <Reminders />, badge: "7" },
  { name: "notes", icon: <Notes /> },
  { name: "freeform", icon: <Freeform /> },
  { name: "chrome", icon: <ChromeApp />, running: true },
  { name: "vscode", icon: <VsCode />, running: true },
  { name: "chatgpt", icon: <ChatGpt />, running: true },
  { name: "spotify", icon: <Spotify />, running: true },
  { name: "safari", icon: <Safari />, running: true },
  { name: "passwords", icon: <Passwords />, running: true },
  { name: "terminal", icon: <Terminal />, running: true },
  { name: "settings", icon: <Settings />, running: true },
];

function Dock() {
  return (
    <div className="relative mx-auto mt-[2px] flex h-[158px] w-[3062px] items-start gap-8 rounded-[52px] border-2 border-[#d3d3da] bg-[linear-gradient(180deg,#bfbfc7_0%,#cfcfd8_45%,#dcdbe6_100%)] pt-[20px] pl-[19px] shadow-[0_0_80px_rgba(0,0,0,0.240)]">
      {apps.map((a) => (
        <div key={a.name} className="relative flex w-[104px] shrink-0 flex-col items-center">
          {a.icon}
          {a.badge && (
            <span className="absolute top-[-12px] right-[-16px] flex h-[50px] w-[50px] items-center justify-center rounded-full bg-[#e35345] text-[27px] text-white shadow-[0_2px_6px_rgba(0,0,0,0.300)]">
              {a.badge}
            </span>
          )}
          {a.running && <span className="mt-5 h-2 w-2 rounded-full bg-[#57565f]" />}
        </div>
      ))}
      <div className="mt-[-2px] ml-[14px] h-[118px] w-[2px] shrink-0 bg-[#9d9da6]" />
      <div className="ml-[12px] flex w-[104px] shrink-0 justify-center"><AdobeFolder /></div>
      <div className="flex w-[104px] shrink-0 justify-center"><Pictures /></div>
      <div className="flex w-[104px] shrink-0 justify-center"><Trash /></div>
    </div>
  );
}

export default function App() {
  return (
    <div className="relative h-[2486px] w-[3840px] overflow-hidden bg-[#d9d9e1] font-['Inter',sans-serif]">
      <div className="absolute top-[84px] left-0 h-10 w-full bg-[#8f8e96]" />
      <Wallpaper />
      <MenuBar />
      <div className="relative mt-[2px] h-[2230px] rounded-[20px] shadow-[0_0_0_1px_#77777b,0_24px_70px_rgba(0,0,0,0.600)]">
        <div className="h-full overflow-hidden rounded-[20px] bg-white">
          <TabStrip />
          <Toolbar />
          <Dashboard />
        </div>
      </div>
      <Dock />
    </div>
  );
}
